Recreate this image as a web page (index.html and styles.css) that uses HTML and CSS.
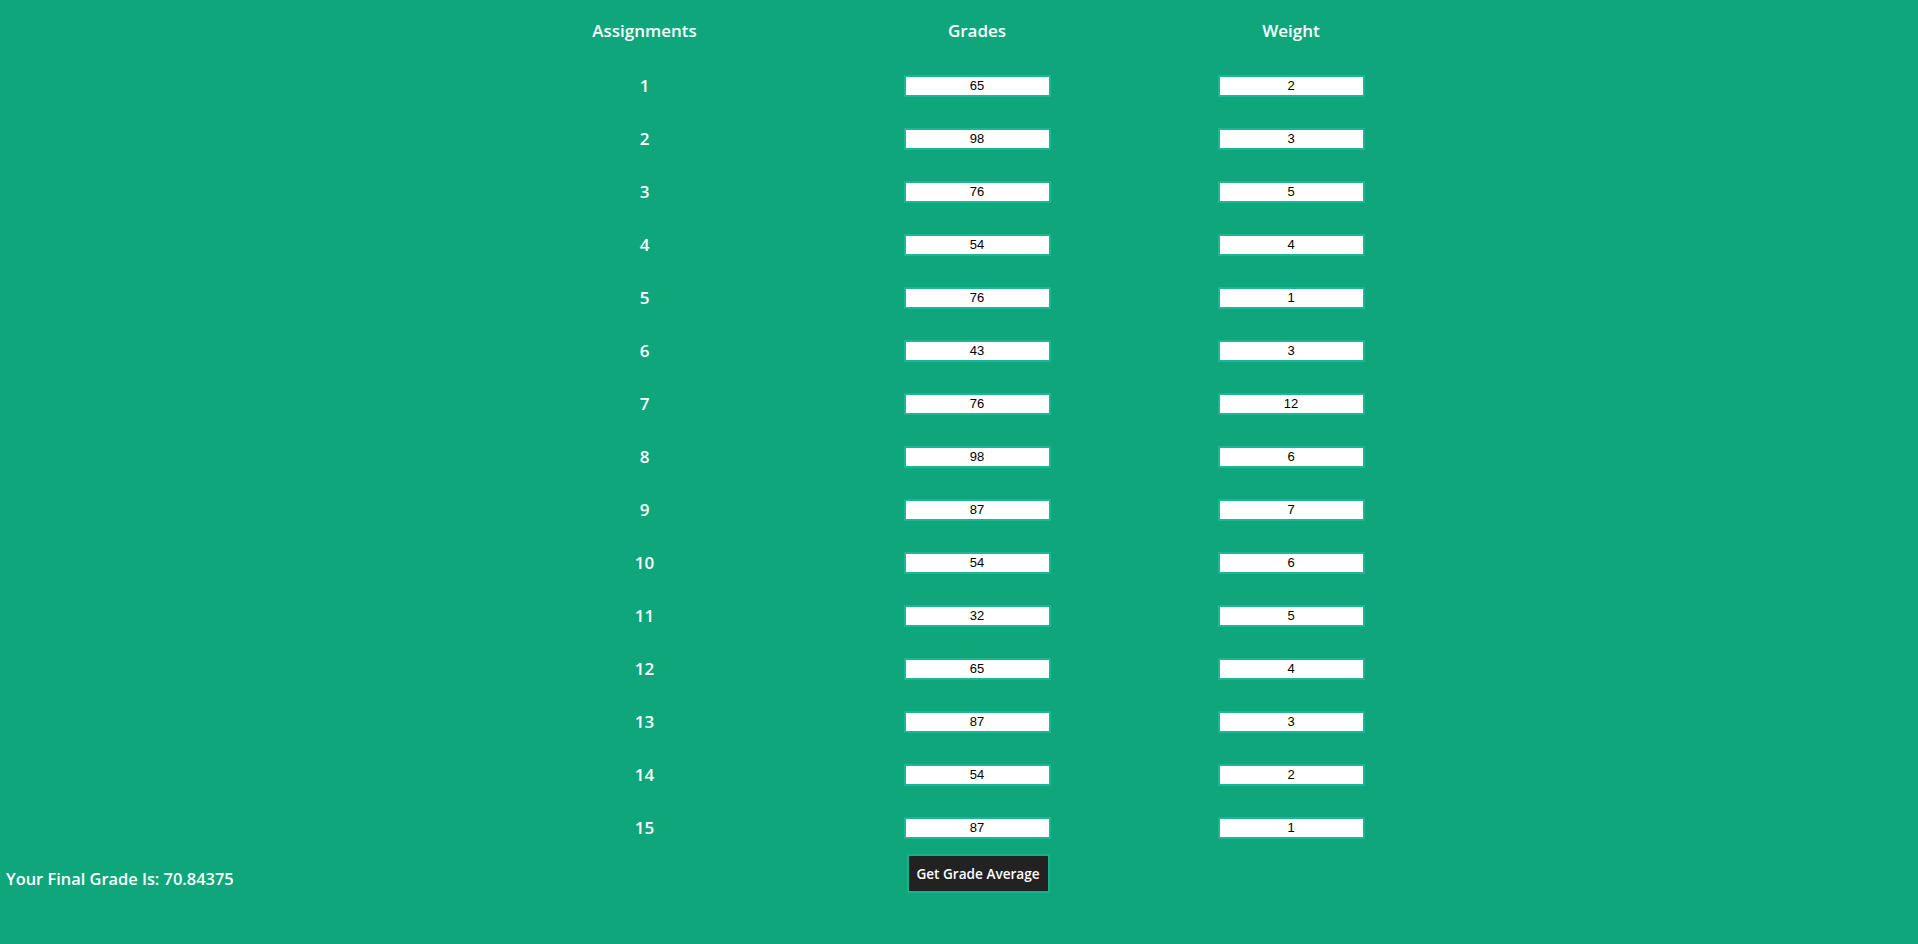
FILE: index.html
```html
<!DOCTYPE html>
<html lang="en">
<head>
<meta charset="utf-8">
<title>Grade Calculator</title>
<link rel="stylesheet" href="styles.css">
</head>
<body>
<main class="sheet">
  <div class="row head">
    <div class="c-num">Assignments</div>
    <div class="c-grade">Grades</div>
    <div class="c-weight">Weight</div>
  </div>
  <div class="row"><div class="c-num">1</div><div class="c-grade"><input class="field" value="65"></div><div class="c-weight"><input class="field" value="2"></div></div>
  <div class="row"><div class="c-num">2</div><div class="c-grade"><input class="field" value="98"></div><div class="c-weight"><input class="field" value="3"></div></div>
  <div class="row"><div class="c-num">3</div><div class="c-grade"><input class="field" value="76"></div><div class="c-weight"><input class="field" value="5"></div></div>
  <div class="row"><div class="c-num">4</div><div class="c-grade"><input class="field" value="54"></div><div class="c-weight"><input class="field" value="4"></div></div>
  <div class="row"><div class="c-num">5</div><div class="c-grade"><input class="field" value="76"></div><div class="c-weight"><input class="field" value="1"></div></div>
  <div class="row"><div class="c-num">6</div><div class="c-grade"><input class="field" value="43"></div><div class="c-weight"><input class="field" value="3"></div></div>
  <div class="row"><div class="c-num">7</div><div class="c-grade"><input class="field" value="76"></div><div class="c-weight"><input class="field" value="12"></div></div>
  <div class="row"><div class="c-num">8</div><div class="c-grade"><input class="field" value="98"></div><div class="c-weight"><input class="field" value="6"></div></div>
  <div class="row"><div class="c-num">9</div><div class="c-grade"><input class="field" value="87"></div><div class="c-weight"><input class="field" value="7"></div></div>
  <div class="row"><div class="c-num">10</div><div class="c-grade"><input class="field" value="54"></div><div class="c-weight"><input class="field" value="6"></div></div>
  <div class="row"><div class="c-num">11</div><div class="c-grade"><input class="field" value="32"></div><div class="c-weight"><input class="field" value="5"></div></div>
  <div class="row"><div class="c-num">12</div><div class="c-grade"><input class="field" value="65"></div><div class="c-weight"><input class="field" value="4"></div></div>
  <div class="row"><div class="c-num">13</div><div class="c-grade"><input class="field" value="87"></div><div class="c-weight"><input class="field" value="3"></div></div>
  <div class="row"><div class="c-num">14</div><div class="c-grade"><input class="field" value="54"></div><div class="c-weight"><input class="field" value="2"></div></div>
  <div class="row"><div class="c-num">15</div><div class="c-grade"><input class="field" value="87"></div><div class="c-weight"><input class="field" value="1"></div></div>
  <div class="row foot">
    <div class="final">Your Final Grade Is: 70.84375</div>
    <div class="c-grade"><button class="btn" type="button">Get Grade Average</button></div>
  </div>
</main>
</body>
</html>
```

FILE: styles.css
```css
html {
  background: #0fa67c;
}
body {
  margin: 0;
  background: #0fa67c;
  color: #ffffff;
  font-family: "Open Sans", "Noto Sans", sans-serif;
  font-weight: 600;
  font-size: 17px;
}
.sheet {
  display: flex;
  flex-direction: column;
}
.row {
  display: grid;
  grid-template-columns: 1fr 350px 314px 314px 1fr;
  height: 53px;
  align-items: center;
}
.row.head {
  height: 59px;
  padding-top: 2px;
  box-sizing: border-box;
}
.c-num {
  grid-column: 2;
  text-align: center;
  padding-right: 1px;
}
.c-grade {
  grid-column: 3;
  display: flex;
  justify-content: center;
}
.c-weight {
  grid-column: 4;
  display: flex;
  justify-content: center;
}
.head .c-grade,
.head .c-weight {
  display: block;
  text-align: center;
}
.field {
  box-sizing: border-box;
  width: 147px;
  height: 22px;
  margin: 0;
  padding: 0;
  border: 2px solid #19b793;
  background: #ffffff;
  color: #000000;
  font-family: "Liberation Sans", Arial, sans-serif;
  font-size: 13px;
  font-weight: 400;
  text-align: center;
  outline: none;
}
.row.foot {
  height: 59px;
  align-items: start;
}
.final {
  grid-column: 1;
  padding-left: 6px;
  margin-top: 13px;
  font-size: 16.4px;
}
.btn {
  box-sizing: border-box;
  width: 143px;
  height: 39px;
  margin: 0 0 0 2px;
  border: 2px solid #16b28e;
  background: #222222;
  color: #ffffff;
  font-family: "Open Sans", "Noto Sans", sans-serif;
  font-weight: 600;
  font-size: 13.6px;
  padding: 0;
}
```
